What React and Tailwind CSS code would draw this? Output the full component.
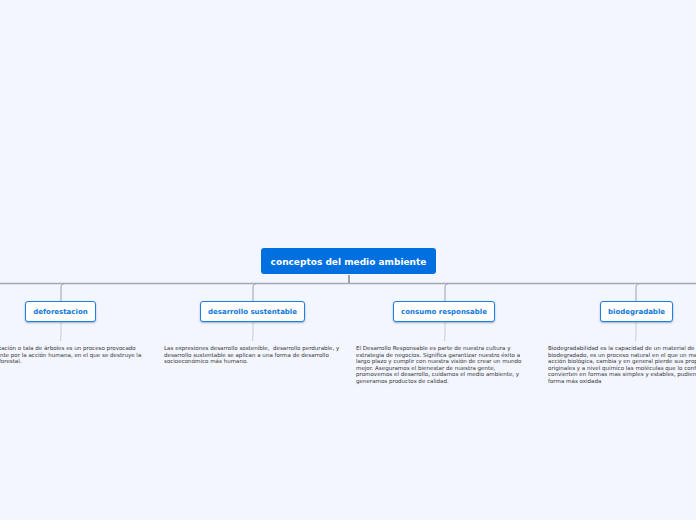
const branches = [
  {
    title: 'deforestacion',
    x: 25,
    w: 71,
    stem: 61,
    textX: -30,
    textW: 178,
    text: 'La deforestación o tala de árboles es un proceso provocado generalmente por la acción humana, en el que se destruye la superficie forestal.',
  },
  {
    title: 'desarrollo sustentable',
    x: 200,
    w: 105,
    stem: 253,
    textX: 164,
    textW: 178,
    text: 'Las expresiones desarrollo sostenible,\u00a0 desarrollo perdurable, y desarrollo sustentable se aplican a una forma de desarrollo socioeconómico más humano.',
  },
  {
    title: 'consumo responsable',
    x: 393,
    w: 102,
    stem: 445,
    textX: 356,
    textW: 172,
    text: 'El Desarrollo Responsable es parte de nuestra cultura y estrategia de negocios. Significa garantizar nuestro éxito a largo plazo y cumplir con nuestra visión de crear un mundo mejor. Aseguramos el bienestar de nuestra gente, promovemos el desarrollo, cuidamos el medio ambiente, y generamos productos de calidad.',
  },
  {
    title: 'biodegradable',
    x: 600,
    w: 73,
    stem: 636,
    textX: 548,
    textW: 178,
    text: 'Biodegradabilidad es la capacidad de un material de ser biodegradado, es un proceso natural en el que un material por acción biológica, cambia y en general pierde sus propiedades originales y a nivel químico las moléculas que lo conforman se convierten en formas mas simples y estables, pudiendo ser forma más oxidada',
  },
]

function Connectors() {
  return (
    <svg className="absolute left-0 top-0" width="696" height="520" fill="none">
      <path d="M349 275V283" stroke="#a3a3a8" strokeWidth="2" />
      <path d="M0 283.5H696" stroke="#a8a9ad" strokeWidth="1.6" />
      {branches.map(b => (
        <g key={b.title}>
          <path d={`M${b.stem + 3} 284Q${b.stem} 284 ${b.stem} 288V301`} stroke="#adafb5" strokeWidth="1.2" />
          <path d={`M${b.stem} 322V333L${b.stem - 0.5} 341`} stroke="#d2d4da" strokeWidth="1.2" />
        </g>
      ))}
    </svg>
  )
}

export default function App() {
  return (
    <div className="relative h-[520px] w-[696px] overflow-hidden bg-[#f3f6ff] font-['DejaVu_Sans',sans-serif]">
      <Connectors />
      <div className="absolute left-[261px] top-[248px] flex h-[26px] w-[175px] items-center justify-center rounded-[3px] bg-[#0070e0] pt-[3px] text-[9px] font-bold text-white">
        conceptos del medio ambiente
      </div>
      {branches.map(b => (
        <div key={b.title}>
          <div
            className="absolute top-[301px] flex h-[21px] items-center justify-center rounded-[3px] border-[1.5px] border-[#1a80e6] bg-white pt-[1px] text-[7px] font-bold whitespace-nowrap text-[#0f78dc] shadow-[0_1px_2px_rgba(0,40,90,0.35)]"
            style={{ left: b.x, width: b.w }}
          >
            {b.title}
          </div>
          <p
            className="absolute top-[345px] text-[5.55px] leading-[6.5px] text-[#333333]"
            style={{ left: b.textX, width: b.textW }}
          >
            {b.text}
          </p>
        </div>
      ))}
    </div>
  )
}
